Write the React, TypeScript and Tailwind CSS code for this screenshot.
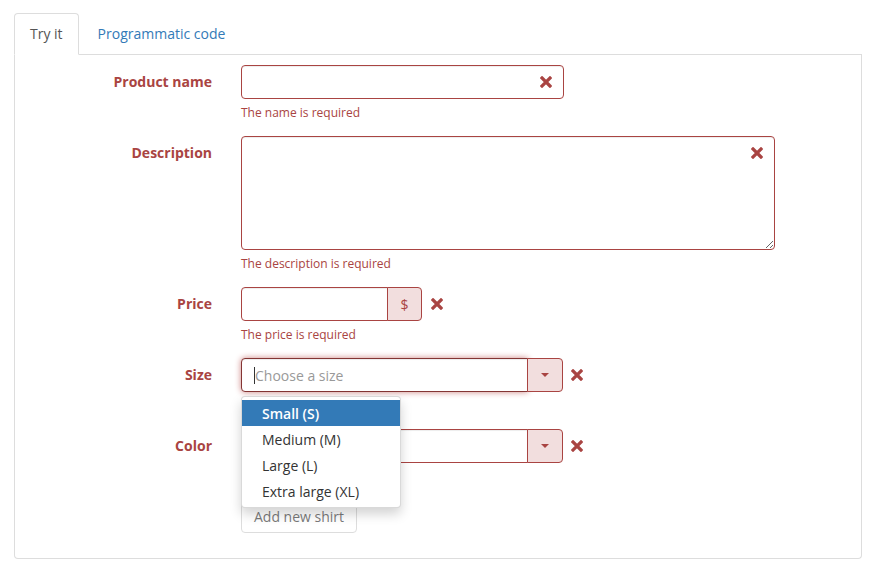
import React from "react";

const red = "#a94442";

function RemoveIcon({ className = "" }: { className?: string }) {
  return (
    <svg width="12" height="12" viewBox="0 0 12 12" className={className}>
      <path d="M2 2 L10 10 M10 2 L2 10" stroke={red} strokeWidth="3.2" strokeLinecap="square" />
    </svg>
  );
}

function Caret() {
  return (
    <svg width="8" height="4" viewBox="0 0 8 4">
      <path d="M0 0 L8 0 L4 4 Z" fill={red} />
    </svg>
  );
}

function Row({ label, children, help, hidden, last }: { label: string; children: React.ReactNode; help?: string; hidden?: boolean; last?: boolean }) {
  return (
    <div className="flex items-start gap-[29px]">
      <label className="w-[197px] shrink-0 text-right font-bold text-[14px] leading-5 pt-[7px] text-[#a94442]">{label}</label>
      <div className="relative">
        {children}
        <p className={(hidden ? "invisible " : "") + (last ? "mb-[14px] " : "mb-[15px] ") + "mt-[5px] text-[12px] leading-[17px] text-[#a94442]"}>{help}</p>
      </div>
    </div>
  );
}

function SelectBox({ focused, placeholder }: { focused?: boolean; placeholder?: string }) {
  return (
    <div className="flex items-center">
      <div className="flex w-[322px] h-[34px]">
        <div
          className={
            focused
              ? "flex-1 flex items-center pl-[12px] bg-white rounded-l-[4px] border border-[#843534] shadow-[inset_0_1px_1px_rgba(0,0,0,0.075),0_0_6px_#ce8483] text-[14px] text-[#999]"
              : "flex-1 flex items-center pl-[12px] bg-white rounded-l-[4px] border border-[#a94442] shadow-[inset_0_1px_1px_rgba(0,0,0,0.075)] text-[14px] text-[#999]"
          }
        >
          {focused && <span className="w-px h-[17px] bg-[#333]" />}
          {placeholder}
        </div>
        <div className="w-[36px] -ml-px flex items-center justify-center bg-[#f2dede] border border-[#a94442] rounded-r-[4px]">
          <Caret />
        </div>
      </div>
      <RemoveIcon className="ml-[8px]" />
    </div>
  );
}

export default function App() {
  return (
    <div className="w-[877px] h-[572px] bg-white pt-[13px] pl-[14px] pr-[15px]" style={{ fontFamily: '"Open Sans", "Liberation Sans", sans-serif' }}>
      {/* Tabs */}
      <div className="flex items-end border-b border-[#ddd] h-[42px]">
        <div className="h-[42px] -mb-px px-[15px] pb-px flex items-center bg-white border border-[#ddd] border-b-white rounded-t-[4px] text-[14px] text-[#555]">
          Try it
        </div>
        <div className="h-[41px] ml-[4px] px-[15px] pb-px flex items-center text-[14px] text-[#337ab7]">Programmatic code</div>
      </div>

      {/* Panel */}
      <div className="h-[504px] border border-t-0 border-[#ddd] rounded-b-[4px] pt-[10px]">
        <Row label="Product name" help="The name is required">
          <div className="relative w-[323px] h-[34px] rounded-[4px] border border-[#a94442] bg-white shadow-[inset_0_1px_1px_rgba(0,0,0,0.075)]">
            <RemoveIcon className="absolute right-[11px] top-[10px]" />
          </div>
        </Row>

        <Row label="Description" help="The description is required">
          <div className="relative w-[534px] h-[114px]">
            <textarea className="block w-full h-full rounded-[4px] border border-[#a94442] bg-white shadow-[inset_0_1px_1px_rgba(0,0,0,0.075)] outline-none" />
            <RemoveIcon className="absolute right-[12px] top-[11px]" />
          </div>
        </Row>

        <Row label="Price" help="The price is required">
          <div className="flex items-center">
            <div className="flex w-[181px] h-[34px]">
              <div className="flex-1 rounded-l-[4px] border border-[#a94442] bg-white shadow-[inset_0_1px_1px_rgba(0,0,0,0.075)]" />
              <div className="w-[35px] -ml-px flex items-center justify-center bg-[#f2dede] border border-[#a94442] rounded-r-[4px] text-[14px] text-[#a94442]">
                $
              </div>
            </div>
            <RemoveIcon className="ml-[9px]" />
          </div>
        </Row>

        <div className="relative">
          <Row label="Size" help="The size is required" hidden>
            <SelectBox focused placeholder="Choose a size" />
            {/* Dropdown */}
            <div className="absolute z-10 left-0 top-[38px] w-[160px] py-[3px] bg-white border border-[rgba(0,0,0,0.15)] rounded-[4px] shadow-[0_6px_12px_rgba(0,0,0,0.175)] text-[14px]">
              <div className="h-[26px] flex items-center px-[20px] bg-[#337ab7] text-white font-semibold">Small (S)</div>
              <div className="h-[26px] flex items-center px-[20px] text-[#333]">Medium (M)</div>
              <div className="h-[26px] flex items-center px-[20px] text-[#333]">Large (L)</div>
              <div className="h-[26px] flex items-center px-[20px] text-[#333]">Extra large (XL)</div>
            </div>
          </Row>
        </div>

        <Row label="Color" help="The color is required" hidden last>
          <SelectBox />
        </Row>

        <div className="flex gap-[29px]">
          <div className="w-[197px]" />
          <button className="h-[34px] px-[12px] rounded-[4px] border border-[#ccc] bg-white text-[14px] text-[#333] opacity-65">
            Add new shirt
          </button>
        </div>
      </div>
    </div>
  );
}
